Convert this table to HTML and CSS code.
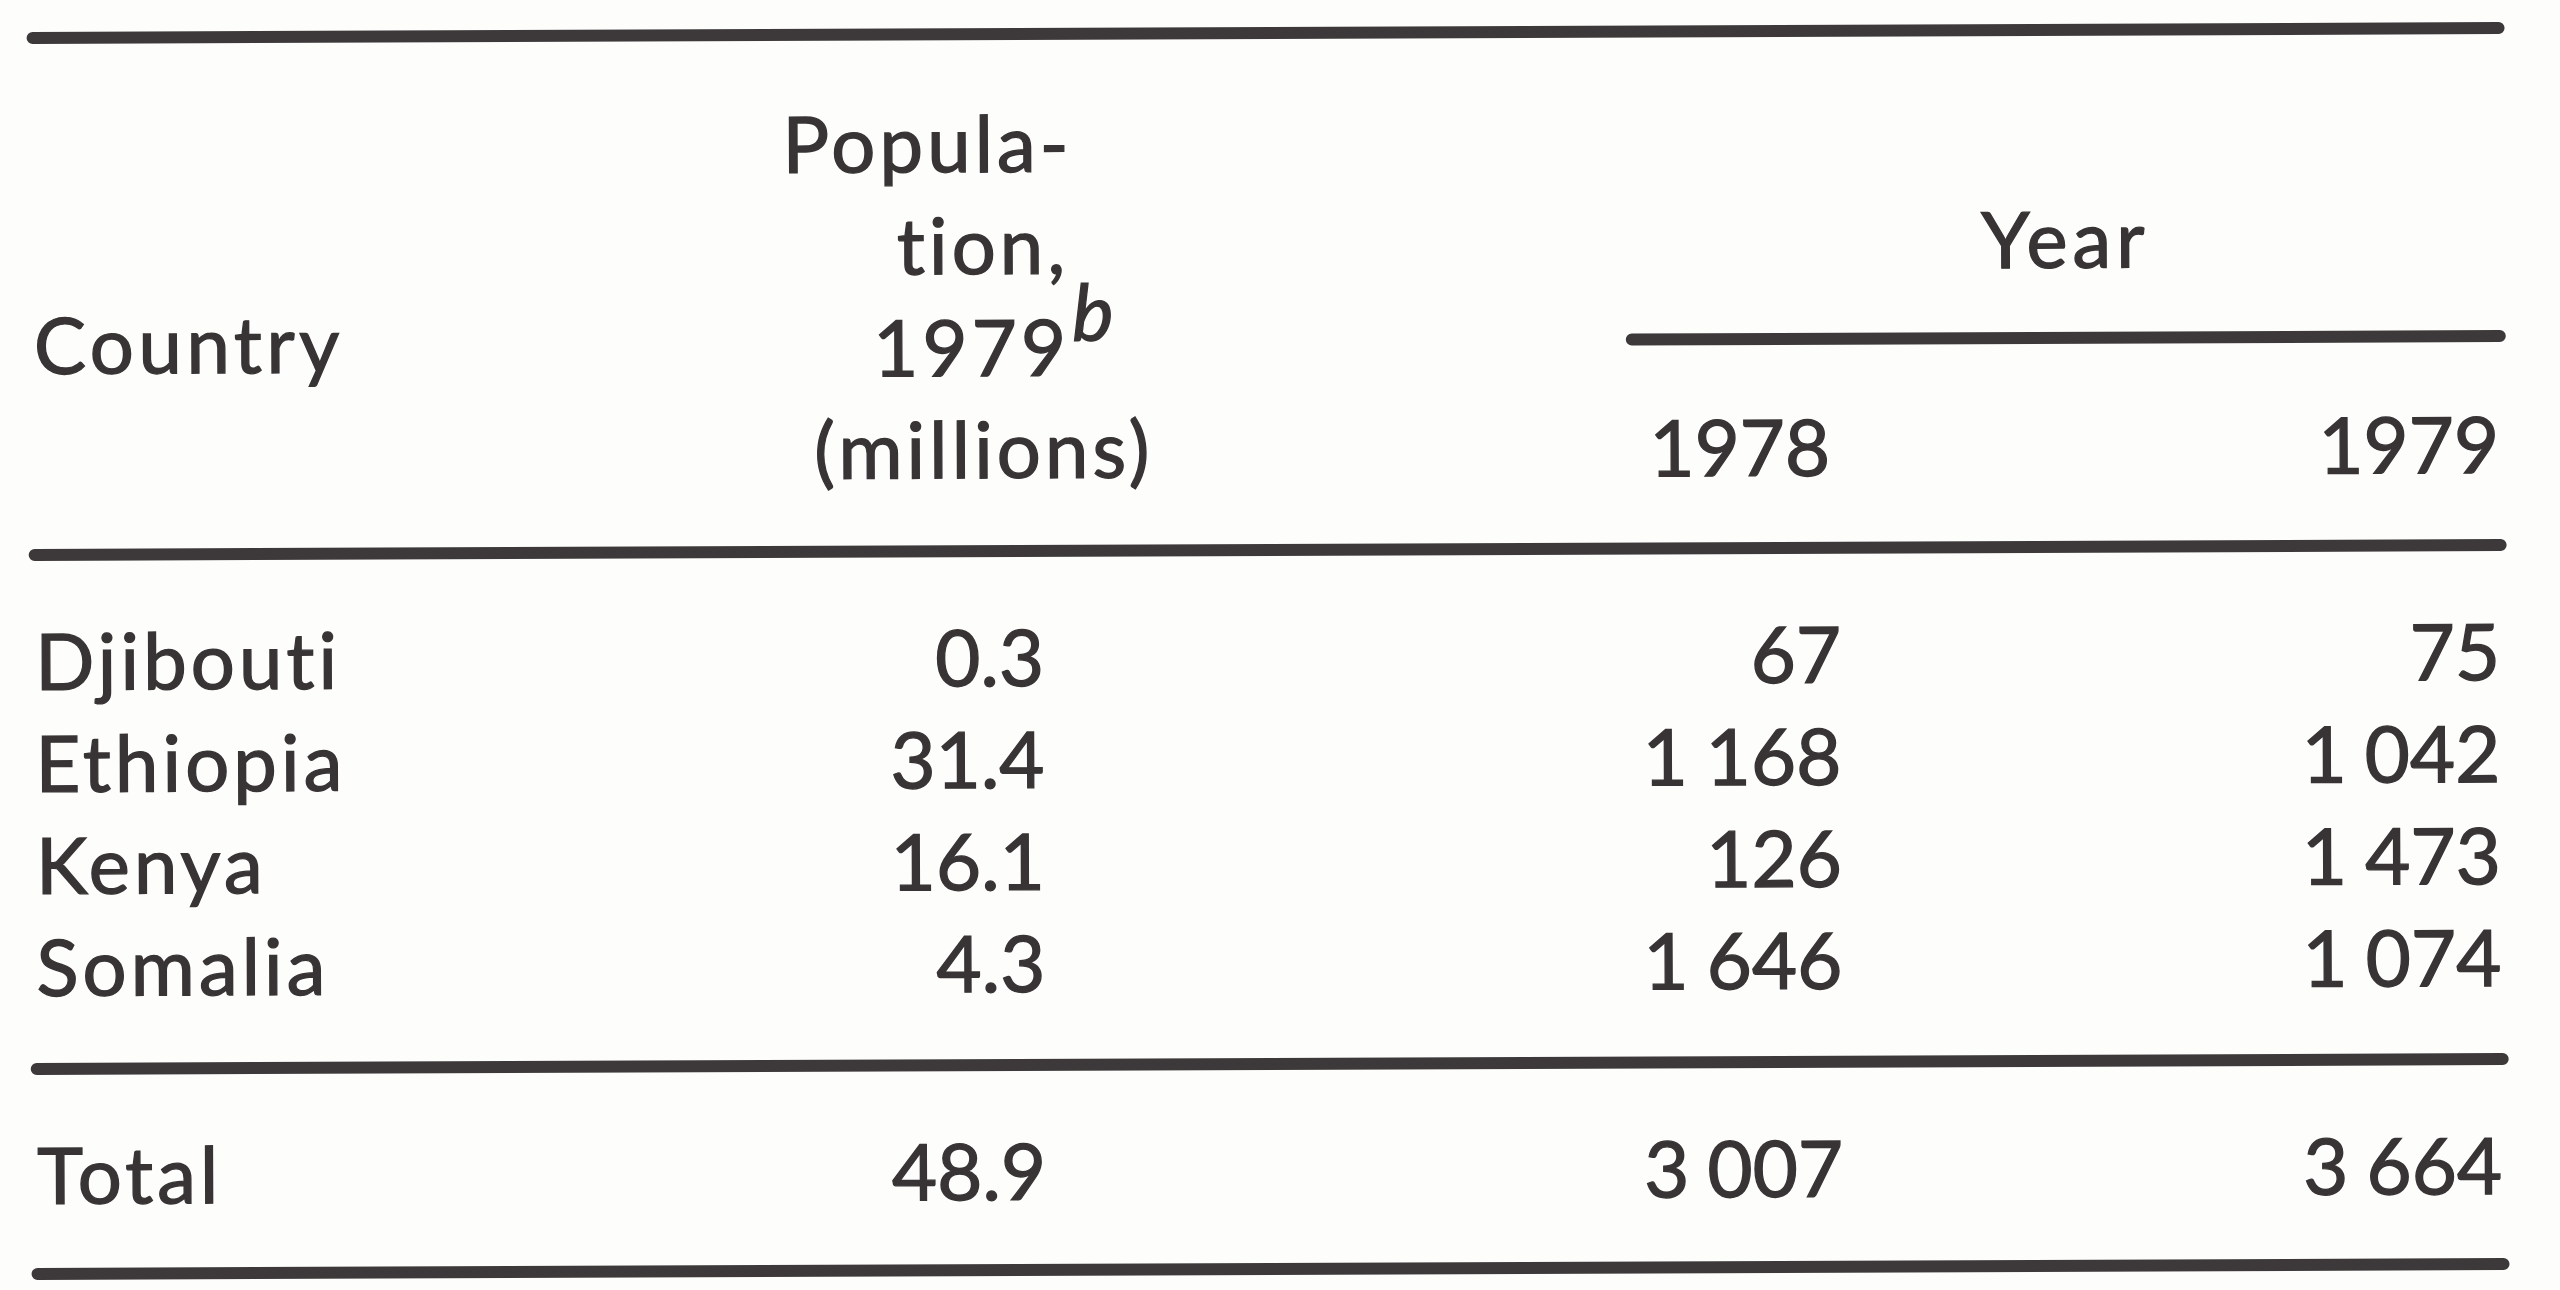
FILE: index.html
```html
<!DOCTYPE html>
<html lang="en">
<head>
<meta charset="utf-8">
<title>Population table</title>
<link rel="stylesheet" href="styles.css">
</head>
<body>
<div class="sheet">
  <div class="rule"></div>
  <div class="head">
    <div class="h-country">Country</div>
    <div class="h-pop">
      <div class="pl pl-first">Popula-</div>
      <div class="pl">tion,</div>
      <div class="pl pl-year">1979<span class="note">b</span></div>
      <div class="pl">(millions)</div>
    </div>
    <div class="h-year">
      <div class="year-label">Year</div>
      <div class="rule rule-year"></div>
      <div class="year-cols">
        <div class="num c3 yh">1978</div>
        <div class="num c4">1979</div>
      </div>
    </div>
  </div>
  <div class="rule"></div>
  <div class="body">
    <div class="row"><div class="name">Djibouti</div><div class="num c2">0.3</div><div class="num c3">67</div><div class="num c4">75</div></div>
    <div class="row"><div class="name">Ethiopia</div><div class="num c2">31.4</div><div class="num c3">1 168</div><div class="num c4">1 042</div></div>
    <div class="row"><div class="name">Kenya</div><div class="num c2">16.1</div><div class="num c3">126</div><div class="num c4">1 473</div></div>
    <div class="row"><div class="name">Somalia</div><div class="num c2">4.3</div><div class="num c3">1 646</div><div class="num c4">1 074</div></div>
  </div>
  <div class="rule"></div>
  <div class="total">
    <div class="row"><div class="name">Total</div><div class="num c2">48.9</div><div class="num c3">3 007</div><div class="num c4">3 664</div></div>
  </div>
  <div class="rule"></div>
</div>
</body>
</html>
```

FILE: styles.css
```css
html, body {
  margin: 0;
  padding: 0;
  background: #fdfdfb;
}

body {
  width: 2560px;
  height: 1290px;
  overflow: hidden;
  font-family: "Lato", "Liberation Sans", sans-serif;
  font-size: 78px;
  font-weight: 400;
  color: #383435;
  -webkit-text-stroke: 1.3px #383435;
  font-variant-numeric: tabular-nums lining-nums;
  font-variant-ligatures: none;
  font-feature-settings: "liga" 0, "clig" 0;
}

.sheet {
  box-sizing: border-box;
  width: 2478px;
  margin-left: 29px;
  padding-top: 27px;
  transform: rotate(-0.23deg);
  transform-origin: 50% 50%;
}

.rule {
  height: 12px;
  background: #3d393a;
  border-radius: 6px;
}

.head,
.row {
  display: grid;
  grid-template-columns: 700px 511px 601px 666px;
}

.head {
  height: 505px;
}

.h-country {
  padding-top: 249px;
  padding-left: 6px;
  line-height: 102px;
  letter-spacing: 4.5px;
}

.h-pop {
  padding-top: 51px;
  text-align: center;
}

.pl {
  line-height: 102px;
  white-space: nowrap;
  letter-spacing: 4px;
}

.pl-first {
  padding-right: 110px;
}

.pl-year {
  padding-left: 24px;
}

.note {
  font-style: italic;
  font-size: 1em;
  line-height: 0;
  vertical-align: 0.45em;
  margin-left: 2px;
}

.h-year {
  grid-column: 3 / 5;
  padding-top: 151px;
}

.year-label {
  line-height: 102px;
  margin-left: 387px;
  text-align: center;
  letter-spacing: 5px;
}

.rule-year {
  margin-top: 43px;
  margin-left: 387px;
}

.year-cols {
  margin-top: 50px;
  display: grid;
  grid-template-columns: 601px 666px;
  line-height: 102px;
}

.body {
  padding-top: 48px;
  padding-bottom: 46px;
}

.total {
  padding-top: 48px;
  padding-bottom: 43px;
}

.row {
  line-height: 102px;
}

.name {
  white-space: nowrap;
  padding-left: 6px;
  letter-spacing: 4px;
}

.num {
  text-align: right;
  white-space: nowrap;
  word-spacing: -2px;
}

.c2 {
  padding-right: 196px;
}

.c3 {
  padding-right: 0;
}

.c3.yh {
  padding-right: 10px;
}

.c4 {
  padding-right: 7px;
}
```
